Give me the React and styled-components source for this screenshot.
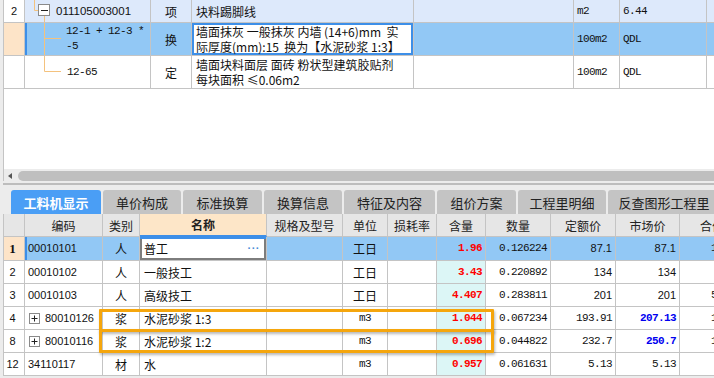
import React from 'react';
import styled, { createGlobalStyle } from 'styled-components';

const GlobalStyle = createGlobalStyle`
  html, body {
    margin: 0;
    padding: 0;
    background: #ececec;
  }
  body {
    font-family: "Noto Sans CJK SC", "Liberation Sans", sans-serif;
    font-size: 12px;
    color: #111;
  }
`;

const fonts = {
  cjk: '"Noto Sans CJK SC", "Liberation Sans", sans-serif',
  mono: '"Liberation Mono", "Noto Sans CJK SC", monospace',
  sans: '"Liberation Sans", "Noto Sans CJK SC", sans-serif',
  serif: '"Liberation Serif", "Noto Sans CJK SC", serif',
};

const sizes = { cjk: '12px', mono: '11px', sans: '11px', serif: '13px' };

const justify = { left: 'flex-start', center: 'center', right: 'flex-end' };

const shadows = {
  mark: 'inset 2px 0 0 #3d8fe8',
  blue: 'inset 0 0 0 2px #3d8fe8',
  gray: 'inset 0 2px 0 #3d8fe8, inset 0 0 0 2px #7d7d7d',
};

const Screen = styled.div`
  width: 714px;
  height: 378px;
  overflow: hidden;
  box-sizing: border-box;
  padding-left: 3px;
  background: #ececec;
  display: flex;
  flex-direction: column;
`;

const TopPane = styled.div`
  flex: none;
  height: 169px;
  background: #fff;
  border-left: 1px solid #c4c4c4;
  overflow: hidden;
`;

const Row = styled.div`
  display: flex;
  height: ${(p) => p.$h}px;
  background: ${(p) => p.$bg || '#fff'};
`;

const Cell = styled.div`
  position: relative;
  flex: none;
  box-sizing: border-box;
  width: ${(p) => p.$w}px;
  height: 100%;
  display: flex;
  align-items: center;
  justify-content: ${(p) => justify[p.$align || 'left']};
  padding: 0 3px 0 ${(p) => (p.$pl == null ? 3 : p.$pl)}px;
  border-right: 1px solid #c4c4c4;
  border-bottom: 1px solid #c4c4c4;
  background: ${(p) => p.$bg || 'transparent'};
  box-shadow: ${(p) => (p.$edge ? shadows[p.$edge] : 'none')};
  font-family: ${(p) => fonts[p.$font || 'cjk']};
  font-size: ${(p) => p.$size || sizes[p.$font || 'cjk']};
  letter-spacing: ${(p) => (p.$font === 'mono' ? '-0.6px' : '0')};
  font-weight: ${(p) => (p.$bold ? 700 : 400)};
  color: ${(p) => p.$color || '#111'};
  line-height: 15px;
  white-space: pre;
  overflow: hidden;
`;

const CellText = styled.span`
  position: relative;
`;

const TreeLines = styled.svg`
  position: absolute;
  left: 0;
  top: 0;
`;

const Dots = styled.span`
  margin-left: auto;
  margin-right: 3px;
  color: #4a8fd8;
  font-family: "Liberation Sans", sans-serif;
  font-weight: 700;
  letter-spacing: 0.5px;
  font-size: 11px;
`;

const Expand = styled.svg`
  flex: none;
  margin-right: 5px;
`;

const HScroll = styled.div`
  flex: none;
  height: 12px;
  box-sizing: border-box;
  padding: 2px 0 0 4px;
  border-left: 1px solid #c4c4c4;
  display: flex;
  align-items: center;
  gap: 6px;
  background: #ececec;
`;

const Thumb = styled.div`
  flex: 1;
  height: 10px;
  border-radius: 5px 0 0 5px;
  background: #bfbfbf;
`;

const Splitter = styled.div`
  flex: none;
  height: 2px;
  margin: 2px 0 5px;
  background: #bdbdbd;
`;

const TabBar = styled.div`
  flex: none;
  display: flex;
  gap: 2px;
  height: 24px;
  padding-left: 8px;
`;

const Tab = styled.div`
  flex: none;
  width: ${(p) => p.$w}px;
  height: 24px;
  border-radius: 3px 3px 0 0;
  display: flex;
  align-items: center;
  justify-content: center;
  background: ${(p) => (p.$active ? '#4a9ef5' : '#c4c4c4')};
  color: ${(p) => (p.$active ? '#fff' : '#222')};
  font-weight: ${(p) => (p.$active ? 700 : 400)};
  font-size: 13px;
  white-space: nowrap;
`;

const BottomGrid = styled.div`
  position: relative;
  flex: none;
  background: #fff;
  border-left: 1px solid #c4c4c4;
`;

const HeadRow = styled.div`
  display: flex;
  height: 23px;
  background: #e6e6e6;
`;

const HeadCell = styled.div`
  flex: none;
  box-sizing: border-box;
  width: ${(p) => p.$w}px;
  height: 100%;
  display: flex;
  align-items: center;
  justify-content: center;
  border-right: 1px solid #c4c4c4;
  border-bottom: ${(p) => (p.$active ? '2px solid #3d8fe8' : '1px solid #c4c4c4')};
  background: ${(p) => (p.$active ? '#fde6c8' : '#e6e6e6')};
  font-weight: ${(p) => (p.$active ? 700 : 400)};
  color: #222;
  font-size: 12px;
  white-space: nowrap;
  overflow: hidden;
`;

const Callout = styled.div`
  position: absolute;
  left: 95px;
  top: ${(p) => p.$top}px;
  width: 395px;
  height: ${(p) => p.$h}px;
  box-sizing: border-box;
  border: 3px solid #f5a60d;
  border-radius: 1px;
  box-shadow: 1px 2px 3px rgba(0, 0, 0, 0.28);
  pointer-events: none;
`;

const ORANGE = '#f4c27e';

function Expander({ minus }) {
  return (
    <Expand width="11" height="11" viewBox="0 0 11 11">
      <rect x="0.5" y="0.5" width="10" height="10" fill="#fff" stroke="#8a8a8a" />
      <path d={minus ? 'M2.5 5.5H8.5' : 'M2.5 5.5H8.5M5.5 2.5V8.5'} stroke="#222" />
    </Expand>
  );
}

function Tree({ kind, h }) {
  return (
    <TreeLines width="126" height={h} viewBox={`0 0 126 ${h}`}>
      {kind === 'root' && (
        <>
          <path d="M9.5 0V10.5H13.5M19.5 15.5V23" stroke={ORANGE} fill="none" />
          <rect x="13.5" y="4.5" width="11" height="11" fill="#fff" stroke="#8a8a8a" />
          <path d="M16 10.5H23" stroke="#222" />
        </>
      )}
      {kind === 'mid' && <path d="M19.5 0V33M19.5 15.5H36" stroke={ORANGE} fill="none" />}
      {kind === 'last' && <path d="M19.5 0V15.5H36" stroke={ORANGE} fill="none" />}
    </TreeLines>
  );
}

const topCols = [21, 126, 41, 222, 160, 46, 87, 80];

const topRows = [
  {
    h: 23,
    bg: '#dde9fb',
    num: '2',
    tree: 'root',
    code: '011105003001',
    codeFont: 'sans',
    codeSize: '11.5px',
    pl: 31,
    type: '项',
    name: '块料踢脚线',
    unit: 'm2',
    qty: '6.44',
  },
  {
    h: 33,
    bg: '#92c8f5',
    num: '',
    numBg: '#fde4c8',
    sel: true,
    tree: 'mid',
    code: '12-1 + 12-3 *\n-5',
    codeFont: 'mono',
    pl: 41,
    type: '换',
    name: '墙面抹灰 一般抹灰 内墙 (14+6)mm  实\n际厚度(mm):15  换为【水泥砂浆 1:3】',
    unit: '100m2',
    qty: 'QDL',
  },
  {
    h: 33,
    bg: '#fff',
    num: '',
    tree: 'last',
    code: '12-65',
    codeFont: 'mono',
    pl: 42,
    type: '定',
    name: '墙面块料面层 面砖 粉状型建筑胶贴剂\n每块面积 ≤0.06m2',
    unit: '100m2',
    qty: 'QDL',
  },
];

const tabs = [
  ['工料机显示', 90],
  ['单价构成', 78],
  ['标准换算', 79],
  ['换算信息', 78],
  ['特征及内容', 91],
  ['组价方案', 79],
  ['工程里明细', 88],
  ['反查图形工程里', 112],
];

const cols = [
  ['', 21],
  ['编码', 78],
  ['类别', 37],
  ['名称', 127],
  ['规格及型号', 76],
  ['单位', 45],
  ['损耗率', 49],
  ['含量', 49],
  ['数量', 65],
  ['定额价', 65],
  ['市场价', 64],
  ['合价', 65],
];

const items = [
  { n: '1', code: '00010101', type: '人', name: '普工', unit: '工日', amt: '1.96', qty: '0.126224', price: '87.1', market: '87.1', total: '10.99', sansPrice: true, sel: true },
  { n: '2', code: '00010102', type: '人', name: '一般技工', unit: '工日', amt: '3.43', qty: '0.220892', price: '134', market: '134', total: '29.6', sansPrice: true },
  { n: '3', code: '00010103', type: '人', name: '高级技工', unit: '工日', amt: '4.407', qty: '0.283811', price: '201', market: '201', total: '57.05', sansPrice: true },
  { n: '4', code: '80010126', plus: true, type: '浆', name: '水泥砂浆 1:3', unit: 'm3', amt: '1.044', qty: '0.067234', price: '193.91', market: '207.13', blue: true, total: '13.93' },
  { n: '8', code: '80010116', plus: true, type: '浆', name: '水泥砂浆 1:2', unit: 'm3', amt: '0.696', qty: '0.044822', price: '232.7', market: '250.7', blue: true, total: '11.24' },
  { n: '12', code: '34110117', type: '材', name: '水', unit: 'm3', amt: '0.957', qty: '0.061631', price: '5.13', market: '5.13', total: '0.32' },
];

function TopRow({ r }) {
  return (
    <Row $h={r.h} $bg={r.bg}>
      <Cell $w={topCols[0]} $align="center" $font="sans" $bg={r.numBg || '#fff'}>{r.num}</Cell>
      <Cell
        $w={topCols[1]}
        $font={r.codeFont}
        $size={r.codeSize}
        $pl={r.pl}
        $edge={r.sel ? 'mark' : null}
        $bg={r.bg}
      >
        <Tree kind={r.tree} h={r.h} />
        <CellText>{r.code}</CellText>
      </Cell>
      <Cell $w={topCols[2]} $align="center" $bg={r.bg}>{r.type}</Cell>
      <Cell $w={topCols[3]} $pl={4} $bg={r.sel ? '#fff' : r.bg} $edge={r.sel ? 'blue' : null}>{r.name}</Cell>
      <Cell $w={topCols[4]} $bg={r.bg} />
      <Cell $w={topCols[5]} $font="mono" $bg={r.bg}>{r.unit}</Cell>
      <Cell $w={topCols[6]} $font="mono" $bg={r.bg}>{r.qty}</Cell>
      <Cell $w={topCols[7]} $bg={r.bg} />
    </Row>
  );
}

function ItemRow({ it }) {
  const bg = it.sel ? '#92c8f5' : '#fff';
  const w = cols.map((c) => c[1]);
  return (
    <Row $h={it.sel ? 24 : 23} $bg={bg}>
      <Cell
        $w={w[0]}
        $align="center"
        $pl={0}
        $font={it.sel ? 'serif' : 'sans'}
        $bold={it.sel}
        $bg={it.sel ? '#fde4c8' : '#fff'}
      >
        {it.n}
      </Cell>
      <Cell $w={w[1]} $font="sans" $pl={it.plus ? 4 : 3} $edge={it.sel ? 'mark' : null}>
        {it.plus && <Expander />}
        {it.code}
      </Cell>
      <Cell $w={w[2]} $align="center">{it.type}</Cell>
      <Cell $w={w[3]} $pl={4} $bg={it.sel ? '#fff' : null} $edge={it.sel ? 'gray' : null}>
        {it.name}
        {it.sel && <Dots>···</Dots>}
      </Cell>
      <Cell $w={w[4]} />
      <Cell $w={w[5]} $align="center" $font={it.unit === 'm3' ? 'mono' : 'cjk'}>{it.unit}</Cell>
      <Cell $w={w[6]} />
      <Cell $w={w[7]} $align="right" $font="mono" $bold $color="#f00" $bg={it.sel ? null : '#dcf6f6'}>{it.amt}</Cell>
      <Cell $w={w[8]} $align="right" $font="mono">{it.qty}</Cell>
      <Cell $w={w[9]} $align="right" $font={it.sansPrice ? 'sans' : 'mono'}>{it.price}</Cell>
      <Cell
        $w={w[10]}
        $align="right"
        $font={it.sansPrice ? 'sans' : 'mono'}
        $bold={it.blue}
        $color={it.blue ? '#0000f0' : null}
      >
        {it.market}
      </Cell>
      <Cell $w={w[11]} $align="right" $font="mono">{it.total}</Cell>
    </Row>
  );
}

export default function App() {
  return (
    <>
      <GlobalStyle />
      <Screen>
        <TopPane>
          {topRows.map((r, i) => (
            <TopRow key={i} r={r} />
          ))}
        </TopPane>
        <HScroll>
          <svg width="4" height="6" viewBox="0 0 4 6">
            <path d="M4 0V6L0 3Z" fill="#555" />
          </svg>
          <Thumb />
        </HScroll>
        <Splitter />
        <TabBar>
          {tabs.map(([label, w], i) => (
            <Tab key={label} $w={w} $active={i === 0}>
              {label}
            </Tab>
          ))}
        </TabBar>
        <BottomGrid>
          <HeadRow>
            {cols.map(([label, w], i) => (
              <HeadCell key={i} $w={w} $active={label === '名称'}>
                {label}
              </HeadCell>
            ))}
          </HeadRow>
          {items.map((it) => (
            <ItemRow key={it.n} it={it} />
          ))}
          <Callout $top={95} $h={23} />
          <Callout $top={115} $h={24} />
        </BottomGrid>
      </Screen>
    </>
  );
}
